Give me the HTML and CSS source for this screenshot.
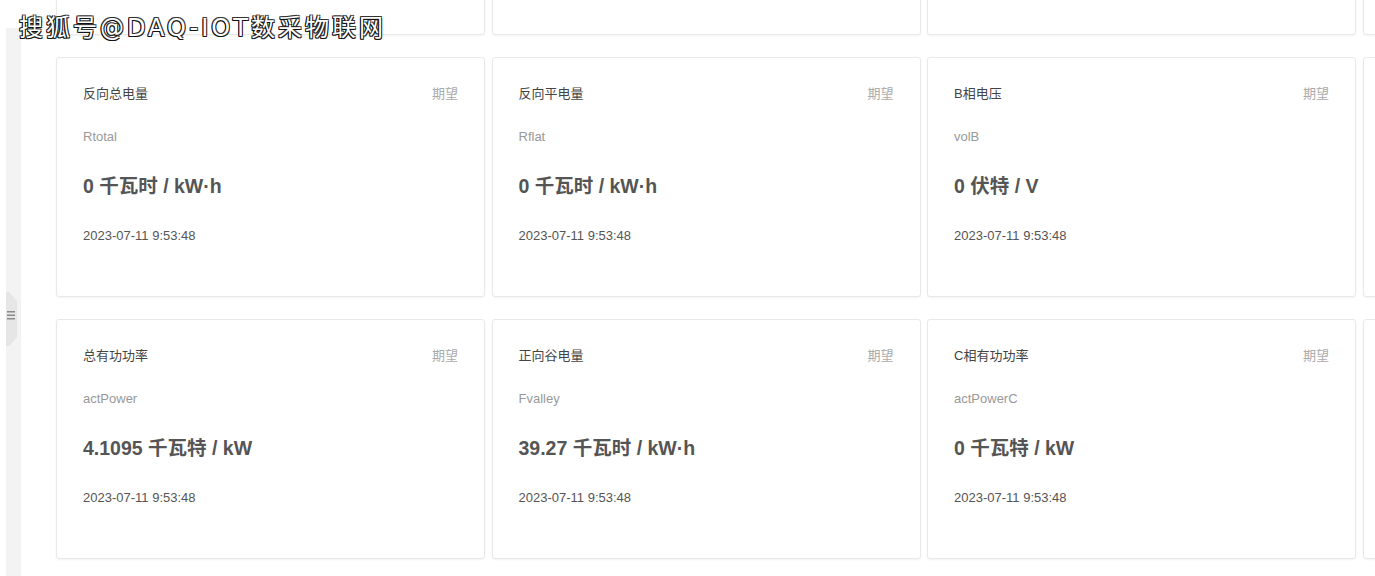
FILE: index.html
```html
<!DOCTYPE html>
<html lang="en">
<head>
    <meta charset="UTF-8">
    <meta name="viewport" content="width=device-width, initial-scale=1.0">
    <title>设备数据</title>
    <link rel="stylesheet" href="styles.css">
</head>
<body>
    <div class="watermark">搜狐号@DAQ-IOT数采物联网</div>

    <div class="page">
        <div class="sidebar">
            <div class="handle">
                <svg width="12" height="54" viewBox="0 0 12 54">
                    <polygon points="0,0 3,0 11,9 11,45 3,54 0,54" fill="#e6e6e6"/>
                    <rect x="1" y="19" width="8" height="1.5" fill="#8a8a8a"/>
                    <rect x="1" y="22.5" width="8" height="1.5" fill="#8a8a8a"/>
                    <rect x="1" y="26" width="8" height="1.5" fill="#8a8a8a"/>
                </svg>
            </div>
        </div>

        <div class="content">
            <div class="card-grid">
                <div class="card">
                    <div class="card-head"><span class="name">正向总电量</span><span class="tag">期望</span></div>
                    <div class="key">Ftotal</div>
                    <div class="value">0 千瓦时 / kW·h</div>
                    <div class="time">2023-07-11 9:53:48</div>
                </div>
                <div class="card">
                    <div class="card-head"><span class="name">正向平电量</span><span class="tag">期望</span></div>
                    <div class="key">Fflat</div>
                    <div class="value">0 千瓦时 / kW·h</div>
                    <div class="time">2023-07-11 9:53:48</div>
                </div>
                <div class="card">
                    <div class="card-head"><span class="name">A相电压</span><span class="tag">期望</span></div>
                    <div class="key">volA</div>
                    <div class="value">0 伏特 / V</div>
                    <div class="time">2023-07-11 9:53:48</div>
                </div>
                <div class="card">
                    <div class="card-head"><span class="name">A相电流</span><span class="tag">期望</span></div>
                    <div class="key">curA</div>
                    <div class="value">0 安培 / A</div>
                    <div class="time">2023-07-11 9:53:48</div>
                </div>

                <div class="card">
                    <div class="card-head"><span class="name">反向总电量</span><span class="tag">期望</span></div>
                    <div class="key">Rtotal</div>
                    <div class="value">0 千瓦时 / kW·h</div>
                    <div class="time">2023-07-11 9:53:48</div>
                </div>
                <div class="card">
                    <div class="card-head"><span class="name">反向平电量</span><span class="tag">期望</span></div>
                    <div class="key">Rflat</div>
                    <div class="value">0 千瓦时 / kW·h</div>
                    <div class="time">2023-07-11 9:53:48</div>
                </div>
                <div class="card">
                    <div class="card-head"><span class="name">B相电压</span><span class="tag">期望</span></div>
                    <div class="key">volB</div>
                    <div class="value">0 伏特 / V</div>
                    <div class="time">2023-07-11 9:53:48</div>
                </div>
                <div class="card">
                    <div class="card-head"><span class="name">B相电流</span><span class="tag">期望</span></div>
                    <div class="key">curB</div>
                    <div class="value">0 安培 / A</div>
                    <div class="time">2023-07-11 9:53:48</div>
                </div>

                <div class="card">
                    <div class="card-head"><span class="name">总有功功率</span><span class="tag">期望</span></div>
                    <div class="key">actPower</div>
                    <div class="value">4.1095 千瓦特 / kW</div>
                    <div class="time">2023-07-11 9:53:48</div>
                </div>
                <div class="card">
                    <div class="card-head"><span class="name">正向谷电量</span><span class="tag">期望</span></div>
                    <div class="key">Fvalley</div>
                    <div class="value">39.27 千瓦时 / kW·h</div>
                    <div class="time">2023-07-11 9:53:48</div>
                </div>
                <div class="card">
                    <div class="card-head"><span class="name">C相有功功率</span><span class="tag">期望</span></div>
                    <div class="key">actPowerC</div>
                    <div class="value">0 千瓦特 / kW</div>
                    <div class="time">2023-07-11 9:53:48</div>
                </div>
                <div class="card">
                    <div class="card-head"><span class="name">C相电流</span><span class="tag">期望</span></div>
                    <div class="key">curC</div>
                    <div class="value">0 安培 / A</div>
                    <div class="time">2023-07-11 9:53:48</div>
                </div>
            </div>
        </div>
    </div>
</body>
</html>
```

FILE: styles.css
```css
body {
    font-family: 'Liberation Sans', 'Noto Sans CJK SC', sans-serif;
    background-color: #fff;
    margin: 0;
    padding: 0;
    height: 576px;
    overflow: hidden;
    color: #333;
}

.page {
    display: flex;
    height: 100%;
}

.sidebar {
    position: relative;
    width: 15px;
    margin-left: 6px;
    margin-top: 28px;
    background-color: #f3f3f3;
    flex-shrink: 0;
}

.handle {
    position: absolute;
    left: 0;
    top: 264px;
    line-height: 0;
}

.content {
    flex: 1;
    padding-left: 35px;
    overflow: hidden;
}

.card-grid {
    display: grid;
    grid-template-columns: repeat(4, 429px);
    grid-auto-rows: 240px;
    column-gap: 6.5px;
    row-gap: 22px;
    margin-top: -205px;
}

.card {
    box-sizing: border-box;
    background-color: #fff;
    border: 1px solid #e9e9e9;
    border-radius: 3px;
    box-shadow: 0 1px 2px rgba(0, 0, 0, 0.05);
    padding: 28px 26px 0 26px;
}

.card-head {
    display: flex;
    justify-content: space-between;
    font-size: 13px;
    line-height: 16px;
}

.card-head .name {
    color: #444;
}

.card-head .tag {
    color: #aaa;
}

.key {
    margin-top: 27px;
    font-size: 13px;
    line-height: 16px;
    color: #999;
}

.value {
    margin-top: 29px;
    font-size: 19.5px;
    line-height: 24px;
    font-weight: bold;
    color: #555;
}

.time {
    margin-top: 30px;
    font-size: 13px;
    line-height: 16px;
    color: #555;
}

.watermark {
    position: absolute;
    left: 19px;
    top: 12px;
    z-index: 2;
    font-family: 'DejaVu Sans', 'Noto Sans CJK SC', sans-serif;
    font-size: 24px;
    line-height: 32px;
    letter-spacing: 3px;
    color: #fff;
    text-shadow: -1px 1px 0 #111, 1px 1px 0 #222, -1px -1px 0 #333, 1px -1px 0 #444, -1px 0 0 #111, 0 1px 0 #111;
}
```
